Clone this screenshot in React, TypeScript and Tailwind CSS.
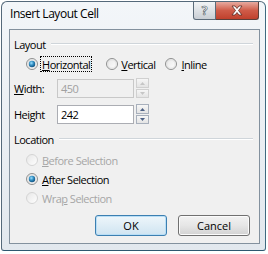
import React from 'react';

const font = { fontFamily: '"Open Sans", "Noto Sans", sans-serif' };

// Vista style radio
function Radio({ checked, disabled }: { checked?: boolean; disabled?: boolean }) {
  return (
    <svg width="12" height="12" viewBox="0 0 12 12" className="shrink-0">
      <defs>
        <linearGradient id="rb" x1="0" y1="0" x2="1" y2="1">
          <stop offset="0" stopColor="#e6e6e6" />
          <stop offset="1" stopColor="#ffffff" />
        </linearGradient>
        <radialGradient id="dot" cx="0.4" cy="0.35" r="0.7">
          <stop offset="0" stopColor="#9ee0ff" />
          <stop offset="0.5" stopColor="#2f8cc0" />
          <stop offset="1" stopColor="#0d4a78" />
        </radialGradient>
      </defs>
      <circle cx="6" cy="6" r="5.5" fill="url(#rb)" stroke={disabled ? '#d4d4d4' : '#8e8f8f'} strokeWidth="1" />
      {!disabled && <circle cx="6" cy="6" r="4.2" fill="none" stroke="#dcdcdc" strokeWidth="0.8" />}
      {checked && <circle cx="6" cy="6" r="3.2" fill="url(#dot)" />}
    </svg>
  );
}

function Spinner({ disabled }: { disabled?: boolean }) {
  const arrow = disabled ? '#c6c6c6' : '#4d6185';
  const border = disabled ? 'border-[#d0d0d0]' : 'border-[#a8b0bc]';
  return (
    <div className="flex flex-col gap-[1px] ml-[2px] h-[20px]">
      <div className={`w-[13px] h-[10px] border ${border} bg-gradient-to-b from-[#f6f6f6] to-[#e4e4e4] flex items-center justify-center`}>
        <svg width="5" height="3" viewBox="0 0 5 3"><path d="M0 3 L2.5 0 L5 3 Z" fill={arrow} /></svg>
      </div>
      <div className={`w-[13px] h-[9px] border ${border} bg-gradient-to-b from-[#f6f6f6] to-[#e4e4e4] flex items-center justify-center`}>
        <svg width="5" height="3" viewBox="0 0 5 3"><path d="M0 0 L2.5 3 L5 0 Z" fill={arrow} /></svg>
      </div>
    </div>
  );
}

function GroupHeader({ label }: { label: string }) {
  return (
    <div className="flex items-center h-[14px] pl-[4px] pr-[6px]">
      <span className="text-[11px] text-black leading-none">{label}</span>
      <div className="flex-1 ml-[5px] h-[2px] border-t border-[#cfd5da] border-b border-b-white" />
    </div>
  );
}

export default function App() {
  return (
    <div className="w-[268px] h-[254px] bg-white overflow-hidden" style={font}>
      <div className="ml-[1px] mt-[1px] w-[265px] h-[250px] rounded-t-[6px] rounded-b-[3px] border border-[#55697a] border-r-[#3f6a80] border-b-[#2e5870] bg-gradient-to-b from-[#f3f6f9] to-[#e2e8ee] flex flex-col">
        {/* title bar */}
        <div className="h-[27px] flex items-start">
          <div className="pl-[8px] pt-[6px] text-[12px] text-black leading-none tracking-[-0.45px]">Insert Layout Cell</div>
          <div className="ml-auto mr-[6px] flex">
            <div className="w-[23px] h-[18px] border border-t-0 border-[#5b6b79] rounded-bl-[3px] bg-gradient-to-b from-[#f1f3f5] via-[#dde1e5] to-[#c9ced4] flex items-center justify-center">
              <span className="text-[12px] font-bold leading-none text-white" style={{ WebkitTextStroke: '0.6px #4a5560' }}>?</span>
            </div>
            <div className="w-[43px] h-[18px] border border-l-0 border-t-0 border-[#5b3f3a] rounded-br-[3px] bg-gradient-to-b from-[#e6aaa0] via-[#cf5b48] to-[#c0402c] flex items-center justify-center">
              <svg width="14" height="11" viewBox="0 0 14 11">
                <path d="M2 1 L5 1 L7 3.5 L9 1 L12 1 L8.5 5.5 L12 10 L9 10 L7 7.5 L5 10 L2 10 L5.5 5.5 Z" fill="#ffffff" stroke="#5a2a22" strokeWidth="0.8" />
              </svg>
            </div>
          </div>
        </div>
        {/* client area */}
        <div className="ml-[7px] mr-[5px] h-[215px] border border-[#83919e] bg-[#f0f0f0] flex flex-col text-[11px] text-black leading-none tracking-[-0.5px]">
          <div className="mt-[7px]">
            <GroupHeader label="Layout" />
          </div>
          <div className="mt-[5px] h-[16px] flex items-center pl-[16px]">
            <Radio checked />
            <span className="ml-[2px] px-[1px] h-[16px] flex items-center border border-dotted border-black">
              <u>H</u>orizontal
            </span>
            <span className="ml-[14px]"><Radio /></span>
            <span className="ml-[3px]"><u>V</u>ertical</span>
            <span className="ml-[10px]"><Radio /></span>
            <span className="ml-[4px]"><u>I</u>nline</span>
          </div>
          <div className="mt-[6px] h-[20px] flex items-center pl-[4px]">
            <span className="w-[43px] text-black"><u>W</u>idth:</span>
            <div className="w-[77px] h-[19px] border border-[#c8c8c8] bg-[#f0f0f0] flex items-center pl-[3px] text-[#a0a0a0]">450</div>
            <Spinner disabled />
          </div>
          <div className="mt-[6px] h-[20px] flex items-center pl-[4px]">
            <span className="w-[43px]">Hei<u>g</u>ht</span>
            <div className="w-[77px] h-[19px] border border-[#abadb3] bg-white flex items-center pl-[3px]">242</div>
            <Spinner />
          </div>
          <div className="mt-[8px]">
            <GroupHeader label="Location" />
          </div>
          <div className="mt-[6px] h-[16px] flex items-center pl-[16px] text-[#a6a6a6]">
            <Radio disabled />
            <span className="ml-[4px]"><u>B</u>efore Selection</span>
          </div>
          <div className="mt-[3px] h-[16px] flex items-center pl-[16px]">
            <Radio checked />
            <span className="ml-[4px]"><u>A</u>fter Selection</span>
          </div>
          <div className="mt-[3px] h-[16px] flex items-center pl-[16px] text-[#a6a6a6]">
            <Radio disabled />
            <span className="ml-[4px]">Wra<u>p</u> Selection</span>
          </div>
          <div className="mt-[9px] flex justify-end gap-[11px] pr-[9px] tracking-normal">
            <button className="w-[72px] h-[21px] rounded-[3px] border border-[#3c7fb1] bg-gradient-to-b from-[#eef6fb] to-[#cfe4f1] shadow-[inset_0_0_0_1px_#b8def6] text-[11px] text-black leading-none">
              OK
            </button>
            <button className="w-[72px] h-[21px] rounded-[3px] border border-[#707070] bg-gradient-to-b from-[#f2f2f2] via-[#e6e6e6] to-[#d2d2d2] shadow-[inset_0_0_0_1px_#fbfbfb] text-[11px] text-black leading-none">
              Cancel
            </button>
          </div>
        </div>
      </div>
    </div>
  );
}
